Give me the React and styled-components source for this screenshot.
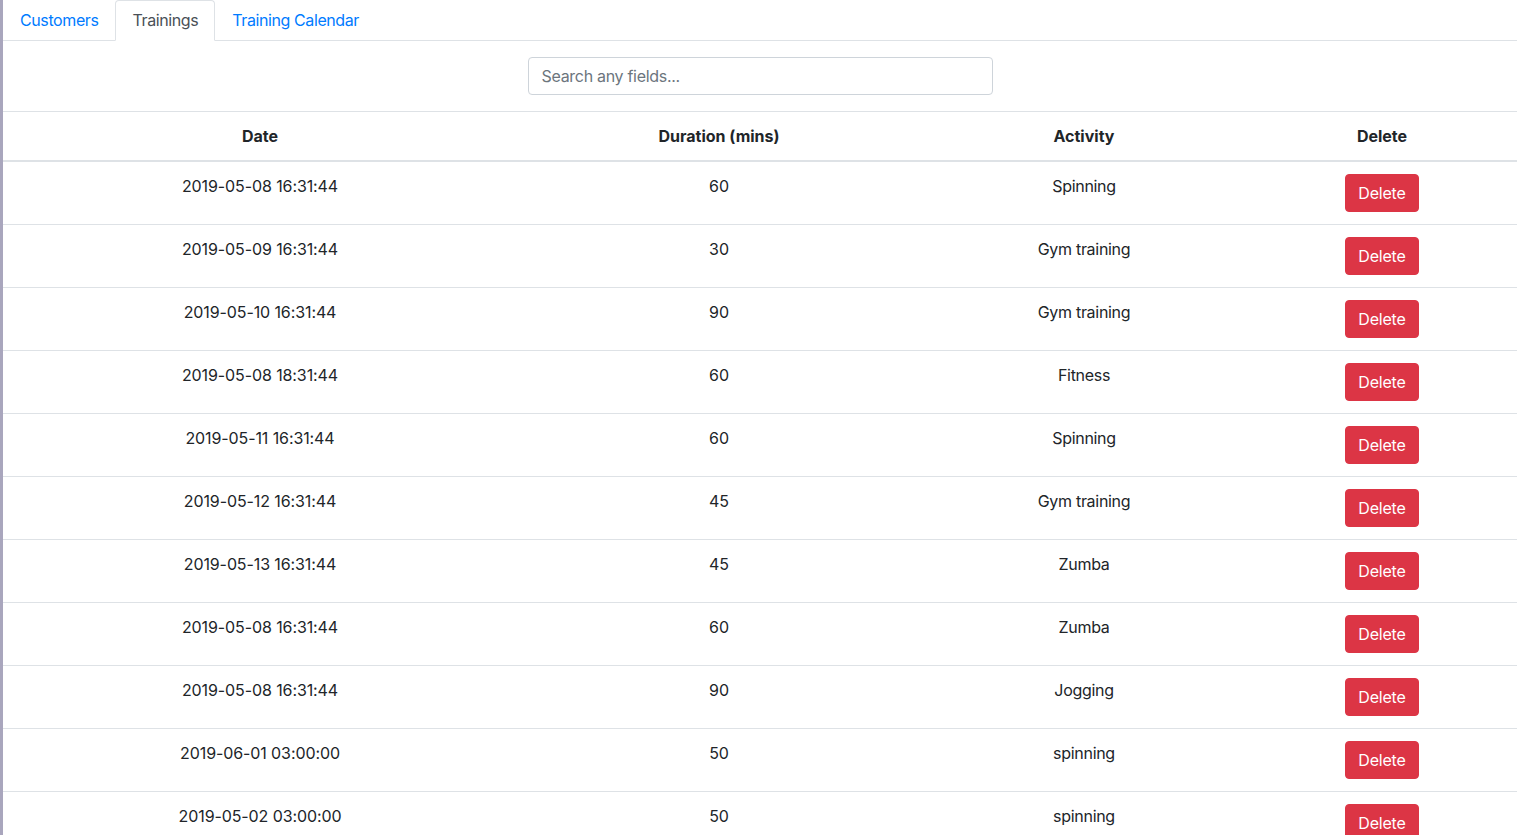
import React, { useState } from "react";
import styled, { createGlobalStyle } from "styled-components";

const trainings = [
  { date: "2019-05-08 16:31:44", duration: 60, activity: "Spinning" },
  { date: "2019-05-09 16:31:44", duration: 30, activity: "Gym training" },
  { date: "2019-05-10 16:31:44", duration: 90, activity: "Gym training" },
  { date: "2019-05-08 18:31:44", duration: 60, activity: "Fitness" },
  { date: "2019-05-11 16:31:44", duration: 60, activity: "Spinning" },
  { date: "2019-05-12 16:31:44", duration: 45, activity: "Gym training" },
  { date: "2019-05-13 16:31:44", duration: 45, activity: "Zumba" },
  { date: "2019-05-08 16:31:44", duration: 60, activity: "Zumba" },
  { date: "2019-05-08 16:31:44", duration: 90, activity: "Jogging" },
  { date: "2019-06-01 03:00:00", duration: 50, activity: "spinning" },
  { date: "2019-05-02 03:00:00", duration: 50, activity: "spinning" },
];

const GlobalStyle = createGlobalStyle`
  body {
    margin: 0;
    border-left: 3px solid #a9a6bd;
    font-family: Inter, "Liberation Sans", sans-serif;
    font-size: 16px;
    line-height: 1.5;
    color: #212529;
    background: #fff;
  }
  * { box-sizing: border-box; }
`;

const App = () => {
  const [search, setSearch] = useState("");
  const tabs = ["Customers", "Trainings", "Training Calendar"];
  const rows = trainings.filter((t) =>
    (t.date + " " + t.duration + " " + t.activity)
      .toLowerCase()
      .includes(search.toLowerCase())
  );
  return (
    <>
      <GlobalStyle />
      <Tabs>
        {tabs.map((t) => (
          <Tab key={t} active={t === "Trainings"}>
            {t}
          </Tab>
        ))}
      </Tabs>
      <SearchWrap>
        <Search
          placeholder="Search any fields..."
          value={search}
          onChange={(e) => setSearch(e.target.value)}
        />
      </SearchWrap>
      <Table>
        <colgroup>
          <col style={{ width: 514 }} />
          <col style={{ width: 404 }} />
          <col style={{ width: 326 }} />
          <col style={{ width: 270 }} />
        </colgroup>
        <thead>
          <tr>
            <Th>Date</Th>
            <Th>Duration (mins)</Th>
            <Th>Activity</Th>
            <Th>Delete</Th>
          </tr>
        </thead>
        <tbody>
          {rows.map((r, i) => (
            <tr key={i}>
              <Td>{r.date}</Td>
              <Td>{r.duration}</Td>
              <Td tight>{r.activity}</Td>
              <Td>
                <DeleteBtn>Delete</DeleteBtn>
              </Td>
            </tr>
          ))}
        </tbody>
      </Table>
    </>
  );
};

const Tabs = styled.div`
  display: flex;
  border-bottom: 1px solid #dee2e6;
`;
const Tab = styled.a`
  display: block;
  padding: 7px 16px 8px;
  margin-bottom: -1px;
  letter-spacing: -0.4px;
  border: 1px solid ${(props) => (props.active ? "#dee2e6" : "transparent")};
  border-bottom-color: ${(props) => (props.active ? "#fff" : "transparent")};
  border-top-left-radius: 4px;
  border-top-right-radius: 4px;
  background: ${(props) => (props.active ? "#fff" : "transparent")};
  color: ${(props) => (props.active ? "#495057" : "#007bff")};
  cursor: pointer;
`;
const SearchWrap = styled.div`
  display: flex;
  justify-content: center;
  padding: 16px 0;
`;
const Search = styled.input`
  width: 465px;
  height: 38px;
  padding: 6px 13px;
  font: inherit;
  letter-spacing: -0.3px;
  color: #495057;
  border: 1px solid #ced4da;
  border-radius: 4px;
  outline: none;
  &::placeholder {
    color: #6c757d;
  }
`;
const Table = styled.table`
  width: 100%;
  table-layout: fixed;
  border-collapse: collapse;
`;
const Th = styled.th`
  padding: 12px;
  font-weight: 700;
  text-align: center;
  vertical-align: bottom;
  border-top: 1px solid #dee2e6;
  border-bottom: 2px solid #dee2e6;
`;
const Td = styled.td`
  padding: 12px;
  text-align: center;
  vertical-align: top;
  letter-spacing: ${(props) => (props.tight ? "-0.3px" : "-0.1px")};
  border-top: 1px solid #dee2e6;
`;
const DeleteBtn = styled.button`
  height: 38px;
  padding: 6px 12px;
  font: inherit;
  letter-spacing: -0.2px;
  color: #fff;
  background: #dc3545;
  border: 1px solid #dc3545;
  border-radius: 4px;
  cursor: pointer;
`;

export default App;
